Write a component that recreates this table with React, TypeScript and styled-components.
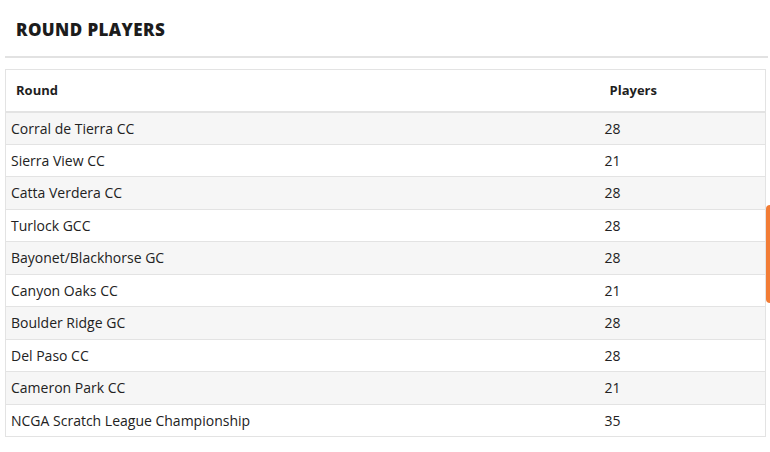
import React from "react";
import styled, { createGlobalStyle } from "styled-components";

const Global = createGlobalStyle`
  html, body { margin: 0; padding: 0; background: #fff; }
  body { font-family: "Open Sans", "Liberation Sans", sans-serif; color: #222; }
`;

const Page = styled.div`
  width: 770px;
  height: 452px;
  padding: 0 4px 0 5px;
  box-sizing: border-box;
  position: relative;
  overflow: hidden;
`;

const Title = styled.h2`
  margin: 0;
  padding: 19px 0 0 11px;
  height: 42px;
  box-sizing: border-box;
  font-size: 17px;
  line-height: 22px;
  font-weight: 800;
  letter-spacing: 0.4px;
  color: #1c1c1c;
`;

const Divider = styled.div`
  margin-top: 14px;
  height: 2px;
  background: #e2e2e2;
  margin-right: -2px;
`;

const Table = styled.table`
  margin-top: 11px;
  width: 761px;
  border-collapse: collapse;
  border: 1px solid #e3e3e3;
  font-size: 14px;
`;

const HeadCell = styled.th<{ $w?: string; $pl: number }>`
  text-align: left;
  font-weight: 700;
  font-size: 13px;
  height: 42px;
  padding: 0 0 0 ${(p) => p.$pl}px;
  width: ${(p) => p.$w ?? "auto"};
  border-bottom: 2px solid #e3e3e3;
  color: #1f1f1f;
  box-sizing: border-box;
`;

const Row = styled.tr<{ $striped: boolean }>`
  background: ${(p) => (p.$striped ? "#f6f6f6" : "#fff")};
  border-bottom: 1px solid #e3e3e3;
`;

const Cell = styled.td`
  height: 32.5px;
  padding: 0 0 0 5px;
  color: #222;
  box-sizing: border-box;
`;

const OrangeTab = styled.div`
  position: absolute;
  right: 0;
  top: 205px;
  width: 4px;
  height: 98px;
  background: #f27c35;
  border-radius: 4px 0 0 4px;
`;

const rows: [string, number][] = [
  ["Corral de Tierra CC", 28],
  ["Sierra View CC", 21],
  ["Catta Verdera CC", 28],
  ["Turlock GCC", 28],
  ["Bayonet/Blackhorse GC", 28],
  ["Canyon Oaks CC", 21],
  ["Boulder Ridge GC", 28],
  ["Del Paso CC", 28],
  ["Cameron Park CC", 21],
  ["NCGA Scratch League Championship", 35],
];

export default function App() {
  return (
    <Page>
      <Global />
      <Title>ROUND PLAYERS</Title>
      <Divider />
      <Table>
        <thead>
          <tr>
            <HeadCell $w="594px" $pl={10}>Round</HeadCell>
            <HeadCell $pl={10}>Players</HeadCell>
          </tr>
        </thead>
        <tbody>
          {rows.map(([name, n], i) => (
            <Row key={name} $striped={i % 2 === 0}>
              <Cell>{name}</Cell>
              <Cell>{n}</Cell>
            </Row>
          ))}
        </tbody>
      </Table>
      <OrangeTab />
    </Page>
  );
}
